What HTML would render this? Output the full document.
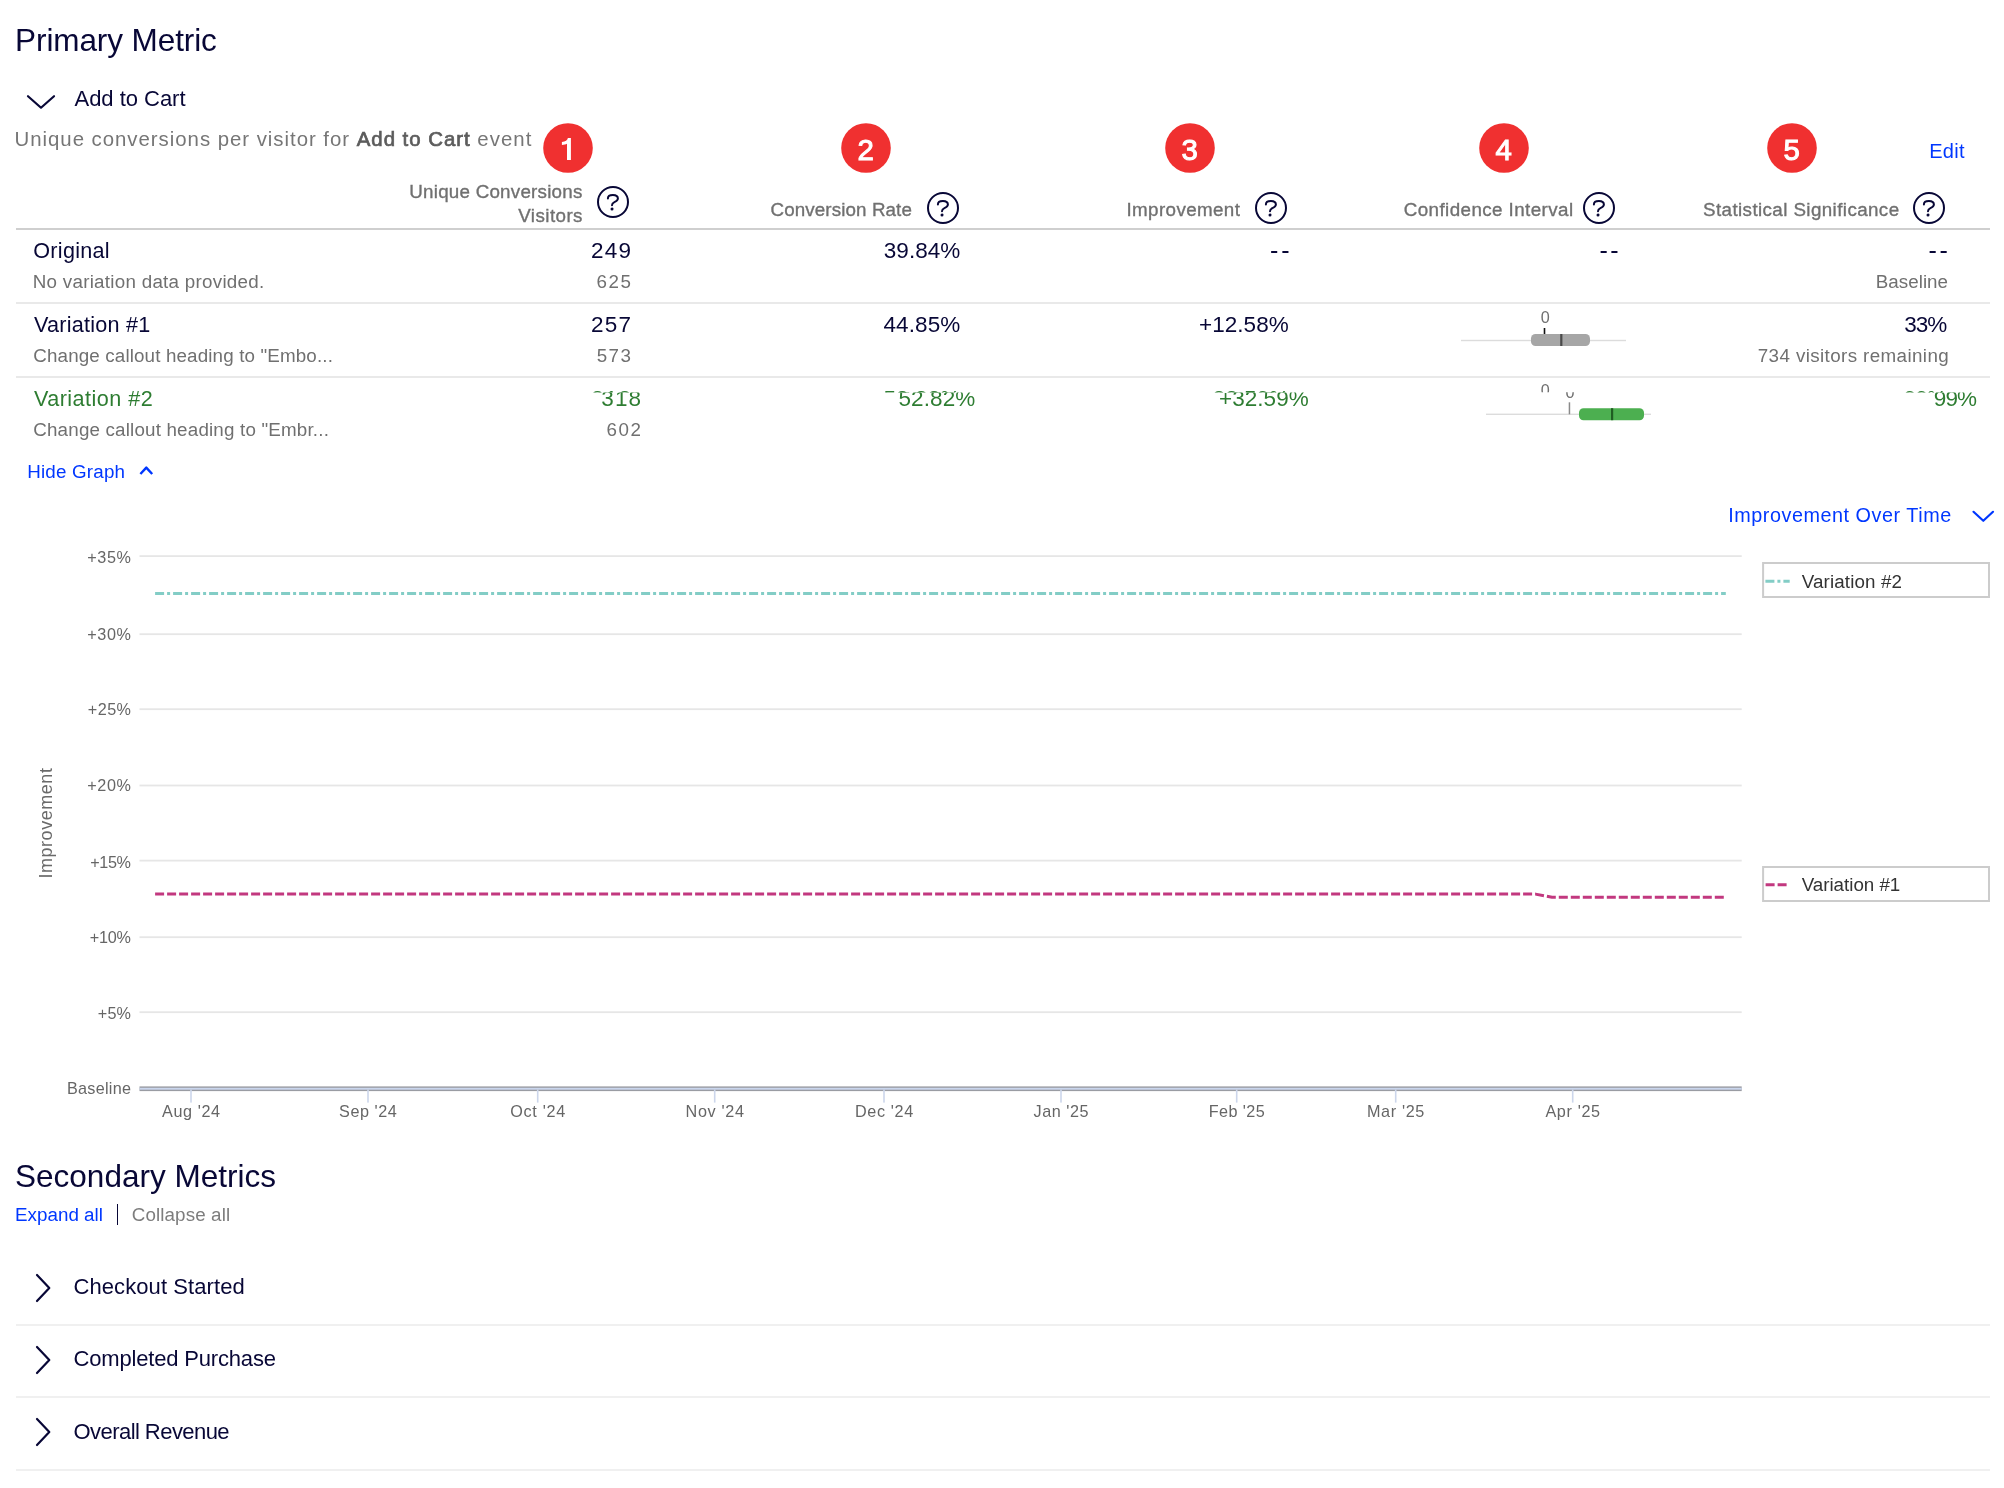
<!DOCTYPE html>
<html lang="en">
<head>
<meta charset="utf-8">
<title>Experiment Results</title>
<style>
html,body{margin:0;padding:0;background:#fff;}
body{width:2004px;height:1488px;position:relative;overflow:hidden;font-family:"Liberation Sans",sans-serif;}
.t{position:absolute;white-space:pre;line-height:1;font-family:"Liberation Sans",sans-serif;}
#page{position:absolute;left:0;top:0;width:2004px;height:1488px;will-change:transform;}
.ln{position:absolute;}
svg{position:absolute;left:0;top:0;overflow:visible;}
svg text{font-family:"Liberation Sans",sans-serif;}
</style>
</head>
<body>
<div id="page">

<div class="t" style="left:15.10px;top:25.00px;font-size:31.5px;letter-spacing:-0.096px;color:#080736;">Primary Metric</div>
<div class="t" style="left:74.50px;top:88.00px;font-size:22px;letter-spacing:-0.025px;color:#080736;">Add to Cart</div>
<div class="t" style="left:14.50px;top:129.00px;font-size:20.4px;letter-spacing:0.970px;color:#767676;">Unique conversions per visitor for</div>
<div class="t" style="left:356.75px;top:129.00px;font-size:20.4px;letter-spacing:0.975px;color:#5c5c5c;-webkit-text-stroke:0.7px #5c5c5c;">Add to Cart</div>
<div class="t" style="left:477.25px;top:129.00px;font-size:20.4px;letter-spacing:1.062px;color:#767676;">event</div>
<div class="t" style="left:1929.25px;top:141.00px;font-size:20px;letter-spacing:0.250px;color:#0037ff;">Edit</div>
<div class="t" style="left:409.25px;top:183.00px;font-size:18.8px;letter-spacing:0.235px;color:#707070;-webkit-text-stroke:0.35px #707070;">Unique Conversions</div>
<div class="t" style="left:518.25px;top:207.00px;font-size:18.8px;letter-spacing:0.429px;color:#707070;-webkit-text-stroke:0.35px #707070;">Visitors</div>
<div class="t" style="left:770.50px;top:201.00px;font-size:18.8px;letter-spacing:0.107px;color:#707070;-webkit-text-stroke:0.35px #707070;">Conversion Rate</div>
<div class="t" style="left:1126.50px;top:201.00px;font-size:18.8px;letter-spacing:0.375px;color:#707070;-webkit-text-stroke:0.35px #707070;">Improvement</div>
<div class="t" style="left:1403.75px;top:201.00px;font-size:18.8px;letter-spacing:0.417px;color:#707070;-webkit-text-stroke:0.35px #707070;">Confidence Interval</div>
<div class="t" style="left:1703.00px;top:201.00px;font-size:18.8px;letter-spacing:0.402px;color:#707070;-webkit-text-stroke:0.35px #707070;">Statistical Significance</div>
<div class="t" style="left:33.25px;top:240.00px;font-size:21.6px;letter-spacing:0.286px;color:#080736;">Original</div>
<div class="t" style="left:32.75px;top:273.00px;font-size:18.8px;letter-spacing:0.269px;color:#707070;">No variation data provided.</div>
<div class="t" style="left:591.00px;top:240.00px;font-size:22.5px;letter-spacing:1.250px;color:#080736;">249</div>
<div class="t" style="left:596.50px;top:273.00px;font-size:18.8px;letter-spacing:1.500px;color:#707070;">625</div>
<div class="t" style="left:883.75px;top:240.00px;font-size:22.5px;letter-spacing:0.050px;color:#080736;">39.84%</div>
<div class="t" style="left:1270.00px;top:238.00px;font-size:25px;letter-spacing:3.000px;color:#080736;">--</div>
<div class="t" style="left:1599.50px;top:238.00px;font-size:25px;letter-spacing:2.500px;color:#080736;">--</div>
<div class="t" style="left:1928.50px;top:238.00px;font-size:25px;letter-spacing:2.750px;color:#080736;">--</div>
<div class="t" style="left:1875.75px;top:273.00px;font-size:18.8px;letter-spacing:0.036px;color:#707070;">Baseline</div>
<div class="t" style="left:34.00px;top:314.00px;font-size:21.6px;letter-spacing:0.227px;color:#080736;">Variation #1</div>
<div class="t" style="left:33.25px;top:347.00px;font-size:18.8px;letter-spacing:0.144px;color:#707070;">Change callout heading to "Embo...</div>
<div class="t" style="left:591.00px;top:314.00px;font-size:22.5px;letter-spacing:1.250px;color:#080736;">257</div>
<div class="t" style="left:596.75px;top:347.00px;font-size:18.8px;letter-spacing:1.375px;color:#707070;">573</div>
<div class="t" style="left:883.50px;top:314.00px;font-size:22.5px;letter-spacing:0.100px;color:#080736;">44.85%</div>
<div class="t" style="left:1199.00px;top:314.00px;font-size:22.5px;letter-spacing:0.042px;color:#080736;">+12.58%</div>
<div class="t" style="left:1904.25px;top:314.00px;font-size:22.5px;letter-spacing:-1.000px;color:#080736;">33%</div>
<div class="t" style="left:1757.75px;top:347.00px;font-size:18.8px;letter-spacing:0.393px;color:#707070;">734 visitors remaining</div>
<div class="t" style="left:34.00px;top:388.00px;font-size:21.6px;letter-spacing:0.455px;color:#2e7d32;">Variation #2</div>
<div class="t" style="left:33.25px;top:421.00px;font-size:18.8px;letter-spacing:0.182px;color:#707070;">Change callout heading to "Embr...</div>
<div class="t" style="left:606.50px;top:421.00px;font-size:18.8px;letter-spacing:1.500px;color:#707070;">602</div>
<div class="t" style="left:601.25px;top:388.00px;font-size:22.5px;letter-spacing:1.125px;color:#2e7d32;clip-path:inset(4.50px -5px -10px -5px);">318</div>
<div class="t" style="left:591.25px;top:388.00px;font-size:22.5px;letter-spacing:1.125px;color:#2e7d32;clip-path:inset(-5px -5px 18.00px -5px);">318</div>
<div class="t" style="left:898.50px;top:388.00px;font-size:22.5px;letter-spacing:0.100px;color:#2e7d32;clip-path:inset(4.50px -5px -10px -5px);">52.82%</div>
<div class="t" style="left:883.50px;top:388.00px;font-size:22.5px;letter-spacing:0.100px;color:#2e7d32;clip-path:inset(-5px -5px 18.00px -5px);">52.82%</div>
<div class="t" style="left:1219.00px;top:388.00px;font-size:22.5px;letter-spacing:0.042px;color:#2e7d32;clip-path:inset(4.50px -5px -10px -5px);">+32.59%</div>
<div class="t" style="left:1199.50px;top:388.00px;font-size:22.5px;letter-spacing:0.042px;color:#2e7d32;clip-path:inset(-5px -5px 18.00px -5px);">+32.59%</div>
<div class="t" style="left:1933.75px;top:388.00px;font-size:22.5px;letter-spacing:-0.875px;color:#2e7d32;clip-path:inset(4.50px -5px -10px -5px);">99%</div>
<div class="t" style="left:1903.75px;top:388.00px;font-size:22.5px;letter-spacing:-0.875px;color:#2e7d32;clip-path:inset(-5px -5px 18.00px -5px);">99%</div>
<div class="t" style="left:27.25px;top:463.00px;font-size:18.8px;letter-spacing:0.194px;color:#0037ff;">Hide Graph</div>
<div class="t" style="left:1728.25px;top:506.00px;font-size:19.8px;letter-spacing:0.537px;color:#0037ff;">Improvement Over Time</div>
<div class="t" style="left:15.00px;top:1161.00px;font-size:31.5px;letter-spacing:0.016px;color:#080736;">Secondary Metrics</div>
<div class="t" style="left:15.00px;top:1206.00px;font-size:18.8px;letter-spacing:0.028px;color:#0037ff;">Expand all</div>
<div class="t" style="left:131.75px;top:1206.00px;font-size:18.8px;letter-spacing:0.114px;color:#7d7d7d;">Collapse all</div>
<div class="t" style="left:73.50px;top:1276.00px;font-size:22px;letter-spacing:0.083px;color:#080736;">Checkout Started</div>
<div class="t" style="left:73.50px;top:1348.00px;font-size:22px;letter-spacing:-0.176px;color:#080736;">Completed Purchase</div>
<div class="t" style="left:73.50px;top:1421.00px;font-size:22px;letter-spacing:-0.554px;color:#080736;">Overall Revenue</div>
<!-- table rules -->
<div class="ln" style="left:16px;top:228px;width:1974px;height:2px;background:#cfcfcf"></div>
<div class="ln" style="left:16px;top:302px;width:1974px;height:2px;background:#e9e9e9"></div>
<div class="ln" style="left:16px;top:376px;width:1974px;height:2px;background:#e9e9e9"></div>
<!-- secondary metric rules -->
<div class="ln" style="left:16px;top:1323.5px;width:1974px;height:2px;background:#f0f0f0"></div>
<div class="ln" style="left:16px;top:1396px;width:1974px;height:2px;background:#f0f0f0"></div>
<div class="ln" style="left:16px;top:1468.5px;width:1974px;height:2px;background:#f0f0f0"></div>
<div class="ln" style="left:116.9px;top:1204px;width:1.6px;height:21px;background:#080736"></div>

<svg width="2004" height="1488" viewBox="0 0 2004 1488">
  <!-- numbered callouts -->
  <g fill="#f03030">
    <circle cx="568" cy="148" r="24.8"/>
    <circle cx="866" cy="148" r="24.8"/>
    <circle cx="1190" cy="148" r="24.8"/>
    <circle cx="1504" cy="148" r="24.8"/>
    <circle cx="1792" cy="148" r="24.8"/>
  </g>
  <g fill="#ffffff" stroke="#ffffff" stroke-width="1.0" font-size="29.4" text-anchor="middle">
    <text x="865.6" y="159.6">2</text>
    <text x="1189.6" y="159.6">3</text>
    <text x="1503.6" y="159.6">4</text>
    <text x="1791.6" y="159.6">5</text>
  </g>
  <path d="M570.9 138 L567.9 138 C567.5 140.3 565.4 141.7 561.9 141.9 L561.9 144.9 C564.2 144.8 565.9 144.4 567 143.7 L567 160.1 L570.9 160.1 Z" fill="#ffffff"/>
  <!-- help icons -->
  <g fill="none" stroke="#080736" stroke-width="2" stroke-linecap="round" stroke-linejoin="round">
    <g transform="translate(613 202)"><circle cx="0" cy="0" r="15"/><path d="M-5.1 -3.6 C-5.1 -5.8 -3.1 -7 -0.1 -7 C2.9 -7 4.9 -5.6 4.9 -3.4 C4.9 -1.4 3.3 -0.6 1.4 0.2 C-0.2 0.9 -1 1.6 -1 3.2"/><circle cx="-1" cy="6.9" r="0.7" stroke-width="1.6"/></g>
    <g transform="translate(943 208)"><circle cx="0" cy="0" r="15"/><path d="M-5.1 -3.6 C-5.1 -5.8 -3.1 -7 -0.1 -7 C2.9 -7 4.9 -5.6 4.9 -3.4 C4.9 -1.4 3.3 -0.6 1.4 0.2 C-0.2 0.9 -1 1.6 -1 3.2"/><circle cx="-1" cy="6.9" r="0.7" stroke-width="1.6"/></g>
    <g transform="translate(1271 208)"><circle cx="0" cy="0" r="15"/><path d="M-5.1 -3.6 C-5.1 -5.8 -3.1 -7 -0.1 -7 C2.9 -7 4.9 -5.6 4.9 -3.4 C4.9 -1.4 3.3 -0.6 1.4 0.2 C-0.2 0.9 -1 1.6 -1 3.2"/><circle cx="-1" cy="6.9" r="0.7" stroke-width="1.6"/></g>
    <g transform="translate(1599 208)"><circle cx="0" cy="0" r="15"/><path d="M-5.1 -3.6 C-5.1 -5.8 -3.1 -7 -0.1 -7 C2.9 -7 4.9 -5.6 4.9 -3.4 C4.9 -1.4 3.3 -0.6 1.4 0.2 C-0.2 0.9 -1 1.6 -1 3.2"/><circle cx="-1" cy="6.9" r="0.7" stroke-width="1.6"/></g>
    <g transform="translate(1929 208)"><circle cx="0" cy="0" r="15"/><path d="M-5.1 -3.6 C-5.1 -5.8 -3.1 -7 -0.1 -7 C2.9 -7 4.9 -5.6 4.9 -3.4 C4.9 -1.4 3.3 -0.6 1.4 0.2 C-0.2 0.9 -1 1.6 -1 3.2"/><circle cx="-1" cy="6.9" r="0.7" stroke-width="1.6"/></g>
  </g>
  <!-- chevrons -->
  <g fill="none" stroke="#080736" stroke-width="2.2" stroke-linecap="round" stroke-linejoin="round">
    <path d="M28 96.2 L41 107.7 L54 96.2"/>
    <path d="M37 1275 L49.3 1288 L37 1301"/>
    <path d="M37 1347 L49.3 1360 L37 1373"/>
    <path d="M37 1419 L49.3 1432 L37 1445"/>
  </g>
  <g fill="none" stroke="#0037ff" stroke-width="2.4" stroke-linecap="round" stroke-linejoin="round">
    <path d="M140.4 474 L146.3 467.6 L152.2 474" stroke-linecap="butt"/>
    <path d="M1973.5 511.8 L1983.3 520.8 L1993 511.8" stroke-width="2.2"/>
  </g>

  <!-- confidence interval: variation #1 -->
  <rect x="1461" y="339.8" width="165" height="1.4" fill="#dcdcdc"/>
  <rect x="1531" y="334" width="59" height="12" rx="4.5" fill="#a6a6a6"/>
  <rect x="1560.2" y="334" width="2.2" height="12" fill="#4a4a4a"/>
  <rect x="1543.7" y="328" width="1.6" height="6" fill="#111"/>
  <text x="1545.2" y="323.3" font-size="16.2" fill="#707070" text-anchor="middle">0</text>

  <!-- confidence interval: variation #2 (stitched) -->
  <rect x="1486" y="413.6" width="165" height="1.4" fill="#dcdcdc"/>
  <rect x="1579" y="408.2" width="65" height="12" rx="4.5" fill="#4caf50"/>
  <rect x="1611" y="408.2" width="2.2" height="12" fill="#1f5c22"/>
  <rect x="1568.7" y="402.3" width="1.5" height="12" fill="#8a8a8a"/>
  <clipPath id="cu"><rect x="1530" y="380" width="30" height="12.2"/></clipPath>
  <clipPath id="cl"><rect x="1555" y="392.2" width="30" height="12"/></clipPath>
  <text x="1545.2" y="396.3" font-size="16.2" fill="#707070" text-anchor="middle" clip-path="url(#cu)">0</text>
  <text x="1570" y="398" font-size="16.2" fill="#707070" text-anchor="middle" clip-path="url(#cl)">0</text>
</svg>

<!-- improvement over time chart -->
<svg width="2004" height="1488" viewBox="0 0 2004 1488">
  <g fill="#e6e6e6">
    <rect x="139.5" y="555.2" width="1602.2" height="1.8"/>
    <rect x="139.5" y="633.3" width="1602.2" height="1.8"/>
    <rect x="139.5" y="708.3" width="1602.2" height="1.8"/>
    <rect x="139.5" y="784.6" width="1602.2" height="1.8"/>
    <rect x="139.5" y="859.7" width="1602.2" height="1.8"/>
    <rect x="139.5" y="936.3" width="1602.2" height="1.8"/>
    <rect x="139.5" y="1011.3" width="1602.2" height="1.8"/>
  </g>
  <g font-size="16.2" fill="#666666">
    <text x="87.25" y="562.8" textLength="43.75" lengthAdjust="spacing">+35%</text>
    <text x="87.25" y="639.6" textLength="43.75" lengthAdjust="spacing">+30%</text>
    <text x="87.75" y="714.9" textLength="43.25" lengthAdjust="spacing">+25%</text>
    <text x="87.25" y="790.9" textLength="43.75" lengthAdjust="spacing">+20%</text>
    <text x="90.25" y="868.0" textLength="40.75" lengthAdjust="spacing">+15%</text>
    <text x="89.75" y="943.1" textLength="41.25" lengthAdjust="spacing">+10%</text>
    <text x="97.75" y="1018.8" textLength="33.25" lengthAdjust="spacing">+5%</text>
    <text x="67" y="1094.2" textLength="64" lengthAdjust="spacing">Baseline</text>
    <text x="162.0" y="1117.3" textLength="58" lengthAdjust="spacing">Aug '24</text>
    <text x="339.1" y="1117.3" textLength="57.7" lengthAdjust="spacing">Sep '24</text>
    <text x="510.2" y="1117.3" textLength="55" lengthAdjust="spacing">Oct '24</text>
    <text x="685.6" y="1117.3" textLength="58.3" lengthAdjust="spacing">Nov '24</text>
    <text x="854.9" y="1117.3" textLength="58.3" lengthAdjust="spacing">Dec '24</text>
    <text x="1033.5" y="1117.3" textLength="55" lengthAdjust="spacing">Jan '25</text>
    <text x="1208.7" y="1117.3" textLength="56" lengthAdjust="spacing">Feb '25</text>
    <text x="1367.0" y="1117.3" textLength="57.3" lengthAdjust="spacing">Mar '25</text>
    <text x="1545.4" y="1117.3" textLength="54.7" lengthAdjust="spacing">Apr '25</text>
  </g>
  <text transform="translate(52 878.6) rotate(-90)" font-size="18" fill="#6a6a6a" textLength="110.5" lengthAdjust="spacing">Improvement</text>
  <rect x="139.5" y="1086.4" width="1602.2" height="4.7" fill="#9a9ca3"/>
  <rect x="139.5" y="1087.8" width="1602.2" height="1.9" fill="#c9d5ec"/>
  <g fill="#ccd6eb">
    <rect x="190.2" y="1089.6" width="1.6" height="13"/>
    <rect x="367.2" y="1089.6" width="1.6" height="13"/>
    <rect x="536.9" y="1089.6" width="1.6" height="13"/>
    <rect x="713.9" y="1089.6" width="1.6" height="13"/>
    <rect x="883.2" y="1089.6" width="1.6" height="13"/>
    <rect x="1060.2" y="1089.6" width="1.6" height="13"/>
    <rect x="1235.9" y="1089.6" width="1.6" height="13"/>
    <rect x="1394.9" y="1089.6" width="1.6" height="13"/>
    <rect x="1571.9" y="1089.6" width="1.6" height="13"/>
  </g>
  <path d="M155.1 593.5 L1725.8 593.5" fill="none" stroke="#83cdc6" stroke-width="3" stroke-dasharray="9 3 3 3"/>
  <path d="M155.1 894.1 L1535.4 894.1 L1552 897.3 L1724 897.3" fill="none" stroke="#c2387f" stroke-width="3" stroke-dasharray="9 3" stroke-linejoin="round"/>
  <g fill="none" stroke="#cccccc" stroke-width="2">
    <rect x="1763.1" y="563" width="225.9" height="34"/>
    <rect x="1763.1" y="867" width="225.9" height="34"/>
  </g>
  <path d="M1765.4 581.3 L1789.7 581.3" fill="none" stroke="#83cdc6" stroke-width="3" stroke-dasharray="9 3 3 3"/>
  <path d="M1765.6 884.7 L1786.7 884.7" fill="none" stroke="#c2387f" stroke-width="3" stroke-dasharray="9 3"/>
  <g font-size="18.8" fill="#333333">
    <text x="1801.7" y="588" textLength="100.3" lengthAdjust="spacing">Variation #2</text>
    <text x="1801.7" y="891" textLength="98.6" lengthAdjust="spacing">Variation #1</text>
  </g>
</svg>

</div>
</body>
</html>
